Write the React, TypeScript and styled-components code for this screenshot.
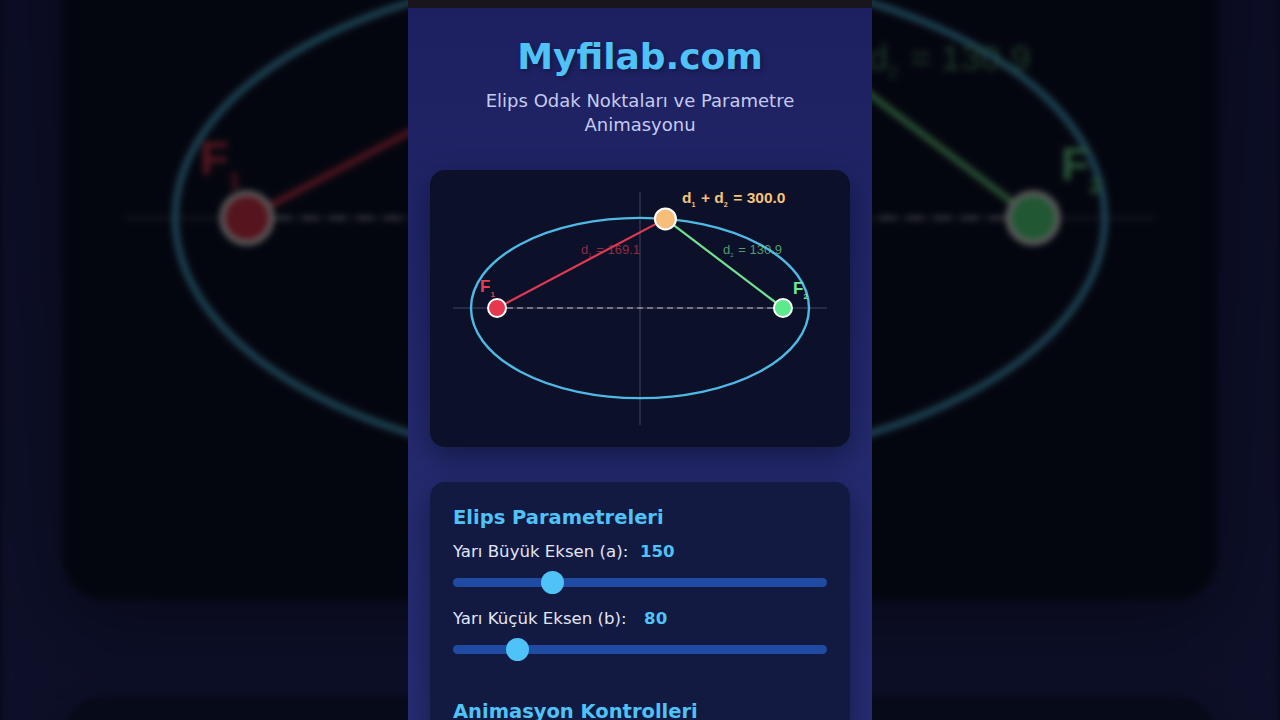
import React from 'react';
import styled, { createGlobalStyle } from 'styled-components';

const GlobalStyle = createGlobalStyle`
  html, body {
    margin: 0;
    padding: 0;
    background: #07081a;
    overflow: hidden;
  }
`;

const A = 150;
const B = 80;
const SCALE = 169 / 150;
const CX = 210;
const CY = 138;

const Stage = styled.div`
  position: relative;
  width: 1280px;
  height: 720px;
  overflow: hidden;
  display: flex;
  justify-content: center;
  background: #07081a;
`;

const Backdrop = styled.div`
  position: absolute;
  inset: 0;
  display: flex;
  justify-content: center;
  pointer-events: none;
  & > div {
    transform-origin: 232px 308px;
    transform: translateY(-90px) scale(2.75);
    filter: blur(1.2px) brightness(0.37);
  }
`;

const Phone = styled.div`
  position: relative;
  width: 464px;
  height: 720px;
  flex: none;
  overflow: hidden;
  background: linear-gradient(180deg, #1d2060 0%, #242a6e 65%, #262d72 100%);
  font-family: "DejaVu Sans", Verdana, sans-serif;
`;

const TopBar = styled.div`
  height: 8px;
  background: #18161c;
`;

const Content = styled.div`
  display: flex;
  flex-direction: column;
  padding: 0 22px;
`;

const Header = styled.header`
  display: flex;
  flex-direction: column;
  align-items: center;
  padding-top: 27px;
`;

const Title = styled.h1`
  margin: 0;
  font-size: 36px;
  line-height: 44px;
  font-weight: 700;
  color: #4fc3f7;
  text-shadow: 2px 2px 5px rgba(0, 0, 0, 0.35);
`;

const Subtitle = styled.p`
  margin: 10px 0 0;
  max-width: 380px;
  text-align: center;
  font-size: 18px;
  line-height: 24px;
  color: #c5cbef;
`;

const Card = styled.section<{ $bg: string; $gap: number }>`
  margin-top: ${(p) => p.$gap}px;
  border-radius: 15px;
  background: ${(p) => p.$bg};
  box-shadow: 0 10px 28px rgba(4, 6, 24, 0.45);
`;

const CanvasCard = styled(Card)`
  height: 277px;
  & svg {
    display: block;
  }
`;

const ParamCard = styled(Card)`
  padding: 21px 23px 0;
  height: 260px;
`;

const SectionTitle = styled.h2<{ $top?: number }>`
  margin: ${(p) => p.$top || 0}px 0 0;
  font-size: 19.5px;
  line-height: 30px;
  font-weight: 700;
  color: #4fc3f7;
`;

const ParamRow = styled.div`
  display: flex;
  align-items: center;
  margin-top: 6px;
  height: 24px;
  font-size: 16.6px;
  color: #e1e5f7;
`;

const Value = styled.span`
  display: inline-block;
  min-width: 40px;
  margin-left: 9px;
  text-align: center;
  font-weight: 700;
  color: #4fc3f7;
`;

const Range = styled.input`
  -webkit-appearance: none;
  appearance: none;
  display: block;
  width: 100%;
  height: 24px;
  margin: 7px 0 12px;
  background: transparent;
  &::-webkit-slider-runnable-track {
    height: 9px;
    border-radius: 5px;
    background: #1f4ba3;
  }
  &::-webkit-slider-thumb {
    -webkit-appearance: none;
    width: 23px;
    height: 23px;
    margin-top: -7px;
    border-radius: 50%;
    background: #4fc3f7;
    border: none;
  }
`;

function Sub({ n, size, dy }: { n: string; size: number; dy: number }) {
  return (
    <>
      <tspan fontSize={size} dy={dy}>{n}</tspan>
      <tspan dy={-dy}>{'\u200a'}</tspan>
    </>
  );
}

function EllipseCanvas() {
  const c = Math.sqrt(A * A - B * B);
  const px = 22.58;
  const py = -B * Math.sqrt(1 - (px / A) ** 2);
  const f1x = CX - c * SCALE;
  const f2x = CX + c * SCALE;
  const pX = CX + px * SCALE;
  const pY = CY + py * SCALE;
  return (
    <svg width="420" height="277" viewBox="0 0 420 277">
      <line x1={CX} y1={22} x2={CX} y2={255} stroke="rgba(200,205,230,0.28)" strokeWidth="1" />
      <line x1={23} y1={CY} x2={397} y2={CY} stroke="rgba(200,205,230,0.28)" strokeWidth="1" />
      <line x1={f1x} y1={CY} x2={f2x} y2={CY} stroke="rgba(225,228,240,0.55)" strokeWidth="1.5" strokeDasharray="6 4" />
      <ellipse cx={CX} cy={CY} rx={A * SCALE} ry={B * SCALE} fill="none" stroke="#4fb9e6" strokeWidth="2.4" />
      <line x1={f1x} y1={CY} x2={pX} y2={pY} stroke="#e03a52" strokeWidth="2.2" />
      <line x1={pX} y1={pY} x2={f2x} y2={CY} stroke="#73e28f" strokeWidth="2.2" />
      <circle cx={f1x} cy={CY} r={9} fill="#e63950" stroke="#ffffff" strokeWidth="2" />
      <circle cx={f2x} cy={CY} r={9} fill="#5ceb8c" stroke="#ffffff" strokeWidth="2" />
      <circle cx={pX} cy={pY} r={10.5} fill="#f6be78" stroke="#ffffff" strokeWidth="2" />
      <g fontFamily="'Liberation Sans', Arial, sans-serif">
        <text x={50} y={122} fill="#e83d55" fontSize="17" fontWeight="700">
          F<Sub n="1" size={8} dy={5} />
        </text>
        <text x={363} y={124} fill="#6fe895" fontSize="17" fontWeight="700">
          F<Sub n="2" size={8} dy={5} />
        </text>
        <text x={151} y={84} fill="rgba(200,56,80,0.7)" fontSize="13">
          d<Sub n="1" size={6} dy={3} /> = 169.1
        </text>
        <text x={293} y={84} fill="rgba(110,210,140,0.72)" fontSize="13">
          d<Sub n="2" size={6} dy={3} /> = 130.9
        </text>
        <text x={252} y={33} fill="#f5c27a" fontSize="15.5" fontWeight="700">
          d<Sub n="1" size={7} dy={4} /> + d<Sub n="2" size={7} dy={4} /> = 300.0
        </text>
      </g>
    </svg>
  );
}

function Screen() {
  return (
    <Phone>
      <TopBar />
      <Content>
        <Header>
          <Title>Myfilab.com</Title>
          <Subtitle>Elips Odak Noktaları ve Parametre Animasyonu</Subtitle>
        </Header>
        <CanvasCard $bg="#0c1129" $gap={33}>
          <EllipseCanvas />
        </CanvasCard>
        <ParamCard $bg="#131a42" $gap={35}>
          <SectionTitle>Elips Parametreleri</SectionTitle>
          <ParamRow>
            Yarı Büyük Eksen (a):<Value>{A}</Value>
          </ParamRow>
          <Range type="range" min={100} max={300} defaultValue={A} />
          <ParamRow>
            Yarı Küçük Eksen (b):<Value>{B}</Value>
          </ParamRow>
          <Range type="range" min={50} max={250} defaultValue={B} />
          <SectionTitle $top={36}>Animasyon Kontrolleri</SectionTitle>
        </ParamCard>
      </Content>
    </Phone>
  );
}

export default function App() {
  return (
    <Stage>
      <GlobalStyle />
      <Backdrop aria-hidden="true">
        <div>
          <Screen />
        </div>
      </Backdrop>
      <Screen />
    </Stage>
  );
}
